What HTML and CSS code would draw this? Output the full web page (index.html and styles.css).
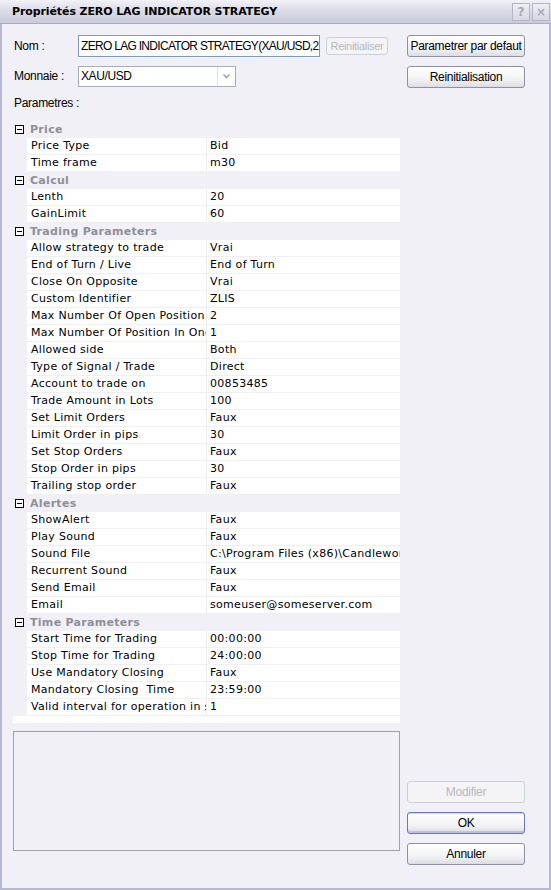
FILE: index.html
```html
<!DOCTYPE html>
<html lang="fr">
<head>
    <meta charset="UTF-8">
    <title>Propriétés ZERO LAG INDICATOR STRATEGY</title>
    <link rel="stylesheet" href="styles.css">
</head>
<body>
<div class="window">
    <div class="titlebar">
        <span class="title">Propriétés ZERO LAG INDICATOR STRATEGY</span>
        <span class="tbtn">?</span>
        <span class="tbtn">&#215;</span>
    </div>

    <div class="content">
        <div class="main">
            <div class="form-row">
                <label class="lbl">Nom :</label>
                <div class="textbox">ZERO LAG INDICATOR STRATEGY(XAU/USD,2</div>
                <button class="btn small" disabled>Reinitialiser</button>
            </div>
            <div class="form-row">
                <label class="lbl">Monnaie :</label>
                <div class="combo">
                    <span class="combo-text">XAU/USD</span>
                    <span class="combo-arrow">
                        <svg width="9" height="6" viewBox="0 0 9 6"><path d="M1.5 1.5 L4.5 4.5 L7.5 1.5" fill="none" stroke="#9aa2b6" stroke-width="1.6"/></svg>
                    </span>
                </div>
            </div>
            <div class="params-lbl">Parametres :</div>

            <div class="grid">
                <div class="cat"><span class="minus"></span>Price</div>
                <div class="row"><span class="name">Price Type</span><span class="val">Bid</span></div>
                <div class="row"><span class="name">Time frame</span><span class="val">m30</span></div>

                <div class="cat"><span class="minus"></span>Calcul</div>
                <div class="row"><span class="name">Lenth</span><span class="val">20</span></div>
                <div class="row"><span class="name">GainLimit</span><span class="val">60</span></div>

                <div class="cat"><span class="minus"></span>Trading Parameters</div>
                <div class="row"><span class="name">Allow strategy to trade</span><span class="val">Vrai</span></div>
                <div class="row"><span class="name">End of Turn / Live</span><span class="val">End of Turn</span></div>
                <div class="row"><span class="name">Close On Opposite</span><span class="val">Vrai</span></div>
                <div class="row"><span class="name">Custom Identifier</span><span class="val">ZLIS</span></div>
                <div class="row"><span class="name">Max Number Of Open Position</span><span class="val">2</span></div>
                <div class="row"><span class="name">Max Number Of Position In One</span><span class="val">1</span></div>
                <div class="row"><span class="name">Allowed side</span><span class="val">Both</span></div>
                <div class="row"><span class="name">Type of Signal / Trade</span><span class="val">Direct</span></div>
                <div class="row"><span class="name">Account to trade on</span><span class="val">00853485</span></div>
                <div class="row"><span class="name">Trade Amount in Lots</span><span class="val">100</span></div>
                <div class="row"><span class="name">Set Limit Orders</span><span class="val">Faux</span></div>
                <div class="row"><span class="name">Limit Order in pips</span><span class="val">30</span></div>
                <div class="row"><span class="name">Set Stop Orders</span><span class="val">Faux</span></div>
                <div class="row"><span class="name">Stop Order in pips</span><span class="val">30</span></div>
                <div class="row"><span class="name">Trailing stop order</span><span class="val">Faux</span></div>

                <div class="cat"><span class="minus"></span>Alertes</div>
                <div class="row"><span class="name">ShowAlert</span><span class="val">Faux</span></div>
                <div class="row"><span class="name">Play Sound</span><span class="val">Faux</span></div>
                <div class="row"><span class="name">Sound File</span><span class="val">C:\Program Files (x86)\Candleworks\FXCM</span></div>
                <div class="row"><span class="name">Recurrent Sound</span><span class="val">Faux</span></div>
                <div class="row"><span class="name">Send Email</span><span class="val">Faux</span></div>
                <div class="row"><span class="name">Email</span><span class="val">someuser@someserver.com</span></div>

                <div class="cat"><span class="minus"></span>Time Parameters</div>
                <div class="row"><span class="name">Start Time for Trading</span><span class="val">00:00:00</span></div>
                <div class="row"><span class="name">Stop Time for Trading</span><span class="val">24:00:00</span></div>
                <div class="row"><span class="name">Use Mandatory Closing</span><span class="val">Faux</span></div>
                <div class="row"><span class="name">Mandatory Closing&nbsp; Time</span><span class="val">23:59:00</span></div>
                <div class="row"><span class="name">Valid interval for operation in sec</span><span class="val">1</span></div>
                <div class="grid-end"></div>
            </div>

            <div class="description"></div>
        </div>

        <div class="side">
            <button class="btn wide">Parametrer par defaut</button>
            <button class="btn wide">Reinitialisation</button>
            <div class="spacer"></div>
            <button class="btn wide" disabled>Modifier</button>
            <button class="btn wide default">OK</button>
            <button class="btn wide">Annuler</button>
        </div>
    </div>
</div>
</body>
</html>
```

FILE: styles.css
```css
/* dialog window */
body {
    margin: 0;
    background: #f1f0f6;
}
.window {
    width: 551px;
    height: 890px;
    box-sizing: border-box;
    border: 2px solid #b6b9d0;
    border-top: none;
    background: #f1f0f6;
    display: flex;
    flex-direction: column;
    font-family: "Liberation Sans", Arial, sans-serif;
    font-size: 11px;
    color: #000;
}
.titlebar {
    height: 24px;
    box-sizing: border-box;
    display: flex;
    align-items: center;
    gap: 2px;
    padding: 0 1px 0 12px;
    background: linear-gradient(#f2f2f8, #dcdce8 45%, #c9cadb);
    border-bottom: 1px solid #a9acc4;
    margin: 0 -2px;
}
.title {
    flex: 1;
    font-family: "DejaVu Sans", Verdana, sans-serif;
    font-weight: bold;
    font-size: 11px;
    letter-spacing: -0.1px;
}
.tbtn {
    width: 18px;
    height: 18px;
    box-sizing: border-box;
    border: 1px solid #b4b6c8;
    background: linear-gradient(#eeeef4, #d6d7e3);
    color: #a6a8b8;
    font-family: "DejaVu Sans", sans-serif;
    font-weight: bold;
    font-size: 12px;
    line-height: 16px;
    text-align: center;
}

.content {
    flex: 1;
    display: flex;
    gap: 7px;
    padding: 11px 24px 23px 11px;
}
.main {
    width: 387px;
    display: flex;
    flex-direction: column;
}
.side {
    width: 118px;
    display: flex;
    flex-direction: column;
    gap: 9px;
}
.spacer {
    flex: 1;
}

/* top form */
.form-row {
    display: flex;
    align-items: center;
    height: 22px;
    margin-bottom: 8px;
}
.lbl,
.params-lbl {
    padding-left: 1px;
    letter-spacing: -0.3px;
    font-size: 12px;
}
.lbl {
    width: 64px;
}
.textbox {
    width: 242px;
    height: 22px;
    box-sizing: border-box;
    border: 1px solid #7f9db9;
    background: #fff;
    padding: 3px 2px;
    font-size: 12px;
    letter-spacing: -0.7px;
    white-space: nowrap;
    overflow: hidden;
}
.combo {
    width: 158px;
    height: 21px;
    box-sizing: border-box;
    border: 1px solid #a5acb5;
    background: #fff;
    display: flex;
    align-items: center;
    font-size: 12px;
    letter-spacing: -0.4px;
}
.combo-text {
    flex: 1;
    padding-left: 2px;
}
.combo-arrow {
    width: 17px;
    height: 19px;
    border-left: 1px solid #e2e4ea;
    display: flex;
    align-items: center;
    justify-content: center;
}
.params-lbl {
    height: 14px;
    margin: 1px 0 11px;
}

/* buttons */
.btn {
    font-family: "Liberation Sans", Arial, sans-serif;
    font-size: 12px;
    letter-spacing: -0.3px;
    color: #000;
    border: 1px solid #8e92a0;
    border-radius: 3px;
    background: linear-gradient(#ffffff, #f3f3f6 60%, #dcdde4);
    padding: 0;
}
.btn.wide {
    width: 118px;
    height: 22px;
}
.btn.small {
    width: 62px;
    height: 18px;
    margin-left: 6px;
    font-size: 11px;
}
.btn:disabled {
    color: #b8b8c0;
    border-color: #cdd0d8;
    background: #f4f4f7;
}
.btn.default {
    border-color: #6a76c6;
    box-shadow: inset 0 -2px 0 #b9c0ea, inset 0 1px 0 #cfd4f3;
}

/* property grid */
.grid {
    font-family: "DejaVu Sans", Verdana, sans-serif;
    font-size: 11px;
    letter-spacing: 0.3px;
    background: #f1f0f6;
}
.cat,
.row {
    height: 17px;
    box-sizing: border-box;
    display: flex;
    align-items: center;
}
.cat {
    font-weight: bold;
    color: #8f8f98;
    padding-left: 2px;
}
.minus {
    width: 9px;
    height: 9px;
    box-sizing: border-box;
    border: 1px solid #000;
    background: #fff;
    margin-right: 6px;
    position: relative;
}
.minus::after {
    content: "";
    position: absolute;
    left: 1px;
    right: 1px;
    top: 3px;
    height: 1px;
    background: #000;
}
.row {
    margin-left: 14px;
    background: #fff;
    border-bottom: 1px solid #f0f0f2;
    align-items: stretch;
}
.name,
.val {
    padding-left: 4px;
    line-height: 16px;
    white-space: nowrap;
    overflow: hidden;
}
.name {
    width: 175px;
    border-right: 1px solid #ededf1;
}
.val {
    flex: 1;
    padding-left: 3px;
}
.grid-end {
    height: 7px;
    background: #fff;
}

.description {
    margin-top: 8px;
    height: 120px;
    box-sizing: border-box;
    border: 1px solid #a0a0a8;
}
```
